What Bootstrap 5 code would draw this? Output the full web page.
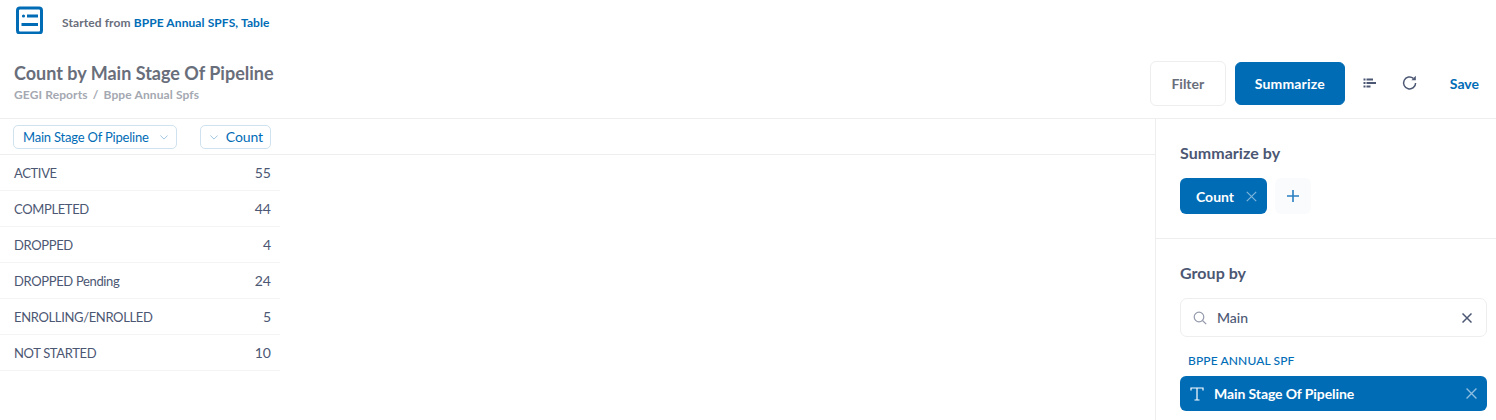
<!DOCTYPE html>
<html lang="en">
<head>
  <meta charset="UTF-8">
  <title>Count by Main Stage Of Pipeline</title>
  <link href="https://cdn.jsdelivr.net/npm/bootstrap@5.3.0/dist/css/bootstrap.min.css" rel="stylesheet">
  <script src="https://cdn.jsdelivr.net/npm/bootstrap@5.3.0/dist/js/bootstrap.bundle.min.js"></script>
  <style>
    html, body { height: 420px; overflow: hidden; }
    body { font-family: Lato, sans-serif; color: #4c5773; background: #fff; }
    .q-blue { color: #016cb6; }
    .top-strip { height: 48px; padding: 4px 0 0 15px; }
    .top-strip svg { display: block; }
    .started { font-size: 12px; font-weight: 700; color: #696e7b; margin-left: 17px; margin-top: 8px; line-height: 22px; letter-spacing: .1px; }
    .head-bar { height: 71px; border-bottom: 1px solid #eeeeef; padding: 0 17px 0 14px; }
    .q-title { font-size: 18px; font-weight: 700; color: #696e7b; line-height: 24px; margin: 13px 0 0; }
    .crumbs { font-size: 12px; font-weight: 700; color: #a4a8b1; line-height: 16px; margin-top: 2px; letter-spacing: .12px; }
    .crumbs span { margin: 0 2px; }
    .head-tools { margin-top: -1px; height: 72px; }
    .btn-filter, .btn-summ { border-radius: 6px; font-size: 14px; font-weight: 700; padding: 0; }
    .btn-filter { height: 45px; width: 76px; background: #fff; border: 1px solid #eeeeef; color: #696e7b; }
    .btn-summ { height: 43px; width: 110px; margin-left: 9px; background: #016cb6; border: 1px solid #016cb6; color: #fff; letter-spacing: .15px; }
    .tool-ic { margin-left: 18px; display: block; }
    .tool-ic.refresh-ic { margin-left: 25px; }
    .save-link { font-size: 14px; font-weight: 700; color: #016cb6; margin-left: 32px; text-decoration: none; }
    .work-area { height: 301px; }
    .table-pane { width: 1155px; flex: none; }
    .col-heads { height: 36px; border-bottom: 1px solid #eeeeef; width: 100%; padding: 0 9px 0 13px; }
    .col-heads-inner { width: 258px; }
    .col-pill { height: 24px; border: 1px solid #cfe2f0; border-radius: 5px; font-size: 14px; color: #016cb6; padding: 0 7px 0 9px; line-height: 22px; background: #fff; letter-spacing: -.1px; white-space: nowrap; }
    .col-pill.pill-wide { font-size: 13px; letter-spacing: -.2px; padding-right: 8px; }
    .col-pill svg { display: inline-block; vertical-align: 2px; }
    .row-item { height: 36px; width: 280px; border-bottom: 1px solid #f4f4f5; padding: 0 9px 0 14px; font-size: 14px; }
    .row-item span:first-child { font-size: 13px; letter-spacing: -.35px; padding-top: 2px; }
    .side-pane { width: 341px; flex: none; border-left: 1px solid #eeeeef; }
    .summ-block { height: 120px; border-bottom: 1px solid #eeeeef; padding: 24px 9px 0 24px; }
    .side-head { font-size: 16px; font-weight: 700; color: #4c5773; line-height: 20px; letter-spacing: .05px; }
    .count-chip { width: 87px; height: 36px; border-radius: 6px; background: #016cb6; color: #fff; font-size: 14px; font-weight: 700; padding: 0 10px 0 16px; margin-top: 15px; }
    .plus-chip { width: 36px; height: 36px; border-radius: 6px; background: #f9fbfc; margin: 15px 0 0 8px; }
    .group-block { padding: 24px 9px 0 24px; }
    .search-box { height: 39px; border: 1px solid #eeeeef; border-radius: 7px; margin-top: 15px; padding: 0 14px 0 12px; font-size: 14px; color: #4c5773; width: 307px; }
    .search-box b { font-weight: 500; margin-left: 10px; flex: 1; }
    .table-name { font-size: 12px; font-weight: 500; color: #016cb6; line-height: 16px; margin: 16px 0 0 8px; letter-spacing: .12px; }
    .pick-row { height: 35px; width: 307px; border-radius: 6px; background: #016cb6; color: #fff; font-size: 14px; font-weight: 700; margin-top: 7px; padding: 0 10px; }
    .pick-row .pick-label { margin-left: 10px; flex: 1; letter-spacing: -.1px; }
  </style>
</head>
<body>
  <div class="top-strip d-flex align-items-start">
    <svg width="30" height="30" viewBox="0 0 30 30" aria-hidden="true">
      <rect x="2.500" y="4" width="24" height="25" rx="2.500" fill="none" stroke="#016cb6" stroke-width="3"/>
      <circle cx="8.500" cy="12" r="1.600" fill="#016cb6"/>
      <rect x="12" y="10.500" width="11" height="3" fill="#016cb6"/>
      <rect x="6.500" y="19" width="16.500" height="3" fill="#016cb6"/>
    </svg>
    <div class="started">Started from <span class="q-blue">BPPE Annual SPFS, Table</span></div>
  </div>

  <div class="head-bar d-flex justify-content-between">
    <div>
      <h1 class="q-title">Count by Main Stage Of Pipeline</h1>
      <div class="crumbs">GEGI Reports <span>/</span> Bppe Annual Spfs</div>
    </div>
    <div class="head-tools d-flex align-items-center">
      <button type="button" class="btn btn-filter">Filter</button>
      <button type="button" class="btn btn-summ">Summarize</button>
      <svg class="tool-ic" width="14" height="12" viewBox="0 0 14 12" aria-hidden="true">
        <g fill="#4c5773"><rect x="0.500" y="1.500" width="2" height="2"/><rect x="3.500" y="1.500" width="6.500" height="2"/><rect x="0.500" y="5" width="2" height="2"/><rect x="3.500" y="5" width="9.500" height="2"/><rect x="0.500" y="8.500" width="2" height="2"/><rect x="3.500" y="8.500" width="4" height="2"/></g>
      </svg>
      <svg class="tool-ic refresh-ic" width="16" height="16" viewBox="0 0 16 16" aria-hidden="true">
        <path d="M13.600 8a6 6 0 1 1-2.200-4.700" fill="none" stroke="#4c5773" stroke-width="1.500"/>
        <path d="M13.800 0.800v4.400H9.400z" fill="#4c5773"/>
      </svg>
      <a href="#" class="save-link">Save</a>
    </div>
  </div>

  <div class="work-area d-flex">
    <div class="table-pane">
      <div class="col-heads d-flex align-items-center">
        <div class="col-heads-inner d-flex justify-content-between">
          <div class="col-pill pill-wide">Main Stage Of Pipeline
            <svg class="ms-2" width="8" height="5" viewBox="0 0 10 6" aria-hidden="true"><path d="M.5.5 5 5 9.500.5" fill="none" stroke="#9cc3e0" stroke-width="1.200"/></svg>
          </div>
          <div class="col-pill">
            <svg class="me-2" width="8" height="5" viewBox="0 0 10 6" aria-hidden="true"><path d="M.5.5 5 5 9.500.5" fill="none" stroke="#9cc3e0" stroke-width="1.200"/></svg>Count
          </div>
        </div>
      </div>
      <div class="row-item d-flex justify-content-between align-items-center"><span>ACTIVE</span><span>55</span></div>
      <div class="row-item d-flex justify-content-between align-items-center"><span>COMPLETED</span><span>44</span></div>
      <div class="row-item d-flex justify-content-between align-items-center"><span>DROPPED</span><span>4</span></div>
      <div class="row-item d-flex justify-content-between align-items-center"><span>DROPPED Pending</span><span>24</span></div>
      <div class="row-item d-flex justify-content-between align-items-center"><span>ENROLLING/ENROLLED</span><span>5</span></div>
      <div class="row-item d-flex justify-content-between align-items-center"><span>NOT STARTED</span><span>10</span></div>
    </div>

    <div class="side-pane">
      <div class="summ-block">
        <div class="side-head">Summarize by</div>
        <div class="d-flex">
          <div class="count-chip d-flex align-items-center justify-content-between">
            <span>Count</span>
            <svg width="11" height="11" viewBox="0 0 11 11" aria-hidden="true"><path d="M.8.8l9.400 9.400M10.200.8.800 10.200" stroke="#7fb5da" stroke-width="1.200" fill="none"/></svg>
          </div>
          <div class="plus-chip d-flex align-items-center justify-content-center">
            <svg width="12" height="12" viewBox="0 0 12 12" aria-hidden="true"><path d="M6 0v12M0 6h12" stroke="#2b7fc0" stroke-width="1.600" fill="none"/></svg>
          </div>
        </div>
      </div>
      <div class="group-block">
        <div class="side-head">Group by</div>
        <div class="search-box d-flex align-items-center">
          <svg width="14" height="14" viewBox="0 0 14 14" aria-hidden="true"><circle cx="6" cy="6" r="4.800" fill="none" stroke="#949aab" stroke-width="1.200"/><path d="M9.500 9.500 13.200 13.200" stroke="#949aab" stroke-width="1.200"/></svg>
          <b>Main</b>
          <svg width="10" height="10" viewBox="0 0 10 10" aria-hidden="true"><path d="M.5.5l9 9M9.500.5l-9 9" stroke="#4c5773" stroke-width="1.500" fill="none"/></svg>
        </div>
        <div class="table-name">BPPE ANNUAL SPF</div>
        <div class="pick-row d-flex align-items-center">
          <svg width="14" height="14" viewBox="0 0 14 14" aria-hidden="true"><path d="M1 3.500V1h12v2.500M7 1v12M4.500 13h5" fill="none" stroke="#fff" stroke-width="1.200"/></svg>
          <span class="pick-label">Main Stage Of Pipeline</span>
          <svg width="11" height="11" viewBox="0 0 10 10" aria-hidden="true"><path d="M.5.5l9 9M9.500.5l-9 9" stroke="#8fbfe0" stroke-width="1.200" fill="none"/></svg>
        </div>
      </div>
    </div>
  </div>
</body>
</html>
